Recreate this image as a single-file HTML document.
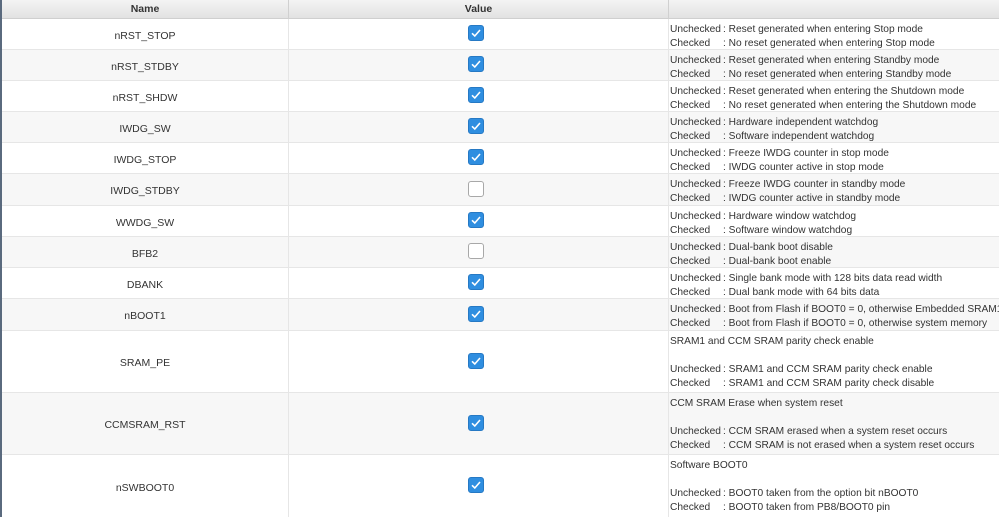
<!DOCTYPE html>
<html><head><style>
*{margin:0;padding:0;box-sizing:border-box}
body{width:999px;height:517px;overflow:hidden;background:#fff;font-family:"Liberation Sans",sans-serif;font-size:10.5px;color:#333;position:relative}
.lb{position:absolute;left:0;top:0;width:2px;height:517px;background:#5a6a7e;z-index:5}
.hdr{position:absolute;left:2px;top:0;width:997px;height:19px;background:linear-gradient(#f4f4f4,#e2e2e2);border-bottom:1px solid #cfcfcf;font-weight:bold;font-size:10.5px;color:#333}
.hdr div{position:absolute;top:0;height:19px;line-height:18px;text-align:center;border-right:1px solid #d0d0d0}
.row{position:absolute;left:2px;width:997px;border-bottom:1px solid #e6e6e6}
.row.g{background:#f7f7f7}
.c{position:absolute;top:0;bottom:0;border-right:1px solid #e6e6e6}
.n{left:0;width:287px;display:flex;align-items:center;justify-content:center;padding-top:3px}
.v{left:287px;width:380px;display:flex;align-items:center;justify-content:center;padding-bottom:2px}
.d{left:667px;width:330px;padding:4px 0 0 1px;line-height:14px;white-space:nowrap;border-right:none;font-size:10.2px}
.l{display:inline-block;width:53px}
.cb{width:16px;height:16px;border-radius:3px;background:#2f8ee0;border:1px solid #2679c4;display:flex;align-items:center;justify-content:center;margin-left:-6px}
.cb.u{background:#fff;border:1.5px solid #a8a8a8}
</style></head><body>
<div class="lb"></div>
<div class="hdr"><div style="left:0;width:287px">Name</div><div style="left:287px;width:380px">Value</div><div style="left:667px;width:330px;border:none"></div></div>

<div class="row" style="top:19px;height:31px"><div class="c n">nRST_STOP</div><div class="c v"><div class="cb"><svg width="12" height="12" viewBox="0 0 12 12"><path d="M2 6.3L4.8 9 10 3" fill="none" stroke="#fff" stroke-width="1.6"/></svg></div></div><div class="c d"><span class="l">Unchecked</span>: Reset generated when entering Stop mode<br><span class="l">Checked</span>: No reset generated when entering Stop mode</div></div>
<div class="row g" style="top:50px;height:31px"><div class="c n">nRST_STDBY</div><div class="c v"><div class="cb"><svg width="12" height="12" viewBox="0 0 12 12"><path d="M2 6.3L4.8 9 10 3" fill="none" stroke="#fff" stroke-width="1.6"/></svg></div></div><div class="c d"><span class="l">Unchecked</span>: Reset generated when entering Standby mode<br><span class="l">Checked</span>: No reset generated when entering Standby mode</div></div>
<div class="row" style="top:81px;height:31px"><div class="c n">nRST_SHDW</div><div class="c v"><div class="cb"><svg width="12" height="12" viewBox="0 0 12 12"><path d="M2 6.3L4.8 9 10 3" fill="none" stroke="#fff" stroke-width="1.6"/></svg></div></div><div class="c d"><span class="l">Unchecked</span>: Reset generated when entering the Shutdown mode<br><span class="l">Checked</span>: No reset generated when entering the Shutdown mode</div></div>
<div class="row g" style="top:112px;height:31px"><div class="c n">IWDG_SW</div><div class="c v"><div class="cb"><svg width="12" height="12" viewBox="0 0 12 12"><path d="M2 6.3L4.8 9 10 3" fill="none" stroke="#fff" stroke-width="1.6"/></svg></div></div><div class="c d"><span class="l">Unchecked</span>: Hardware independent watchdog<br><span class="l">Checked</span>: Software independent watchdog</div></div>
<div class="row" style="top:143px;height:31px"><div class="c n">IWDG_STOP</div><div class="c v"><div class="cb"><svg width="12" height="12" viewBox="0 0 12 12"><path d="M2 6.3L4.8 9 10 3" fill="none" stroke="#fff" stroke-width="1.6"/></svg></div></div><div class="c d"><span class="l">Unchecked</span>: Freeze IWDG counter in stop mode<br><span class="l">Checked</span>: IWDG counter active in stop mode</div></div>
<div class="row g" style="top:174px;height:32px"><div class="c n">IWDG_STDBY</div><div class="c v"><div class="cb u"></div></div><div class="c d"><span class="l">Unchecked</span>: Freeze IWDG counter in standby mode<br><span class="l">Checked</span>: IWDG counter active in standby mode</div></div>
<div class="row" style="top:206px;height:31px"><div class="c n">WWDG_SW</div><div class="c v"><div class="cb"><svg width="12" height="12" viewBox="0 0 12 12"><path d="M2 6.3L4.8 9 10 3" fill="none" stroke="#fff" stroke-width="1.6"/></svg></div></div><div class="c d"><span class="l">Unchecked</span>: Hardware window watchdog<br><span class="l">Checked</span>: Software window watchdog</div></div>
<div class="row g" style="top:237px;height:31px"><div class="c n">BFB2</div><div class="c v"><div class="cb u"></div></div><div class="c d"><span class="l">Unchecked</span>: Dual-bank boot disable<br><span class="l">Checked</span>: Dual-bank boot enable</div></div>
<div class="row" style="top:268px;height:31px"><div class="c n">DBANK</div><div class="c v"><div class="cb"><svg width="12" height="12" viewBox="0 0 12 12"><path d="M2 6.3L4.8 9 10 3" fill="none" stroke="#fff" stroke-width="1.6"/></svg></div></div><div class="c d"><span class="l">Unchecked</span>: Single bank mode with 128 bits data read width<br><span class="l">Checked</span>: Dual bank mode with 64 bits data</div></div>
<div class="row g" style="top:299px;height:32px"><div class="c n">nBOOT1</div><div class="c v"><div class="cb"><svg width="12" height="12" viewBox="0 0 12 12"><path d="M2 6.3L4.8 9 10 3" fill="none" stroke="#fff" stroke-width="1.6"/></svg></div></div><div class="c d"><span class="l">Unchecked</span>: Boot from Flash if BOOT0 = 0, otherwise Embedded SRAM1<br><span class="l">Checked</span>: Boot from Flash if BOOT0 = 0, otherwise system memory</div></div>
<div class="row" style="top:331px;height:62px"><div class="c n">SRAM_PE</div><div class="c v"><div class="cb"><svg width="12" height="12" viewBox="0 0 12 12"><path d="M2 6.3L4.8 9 10 3" fill="none" stroke="#fff" stroke-width="1.6"/></svg></div></div><div class="c d">SRAM1 and CCM SRAM parity check enable<br><br><span class="l">Unchecked</span>: SRAM1 and CCM SRAM parity check enable<br><span class="l">Checked</span>: SRAM1 and CCM SRAM parity check disable</div></div>
<div class="row g" style="top:393px;height:62px"><div class="c n">CCMSRAM_RST</div><div class="c v"><div class="cb"><svg width="12" height="12" viewBox="0 0 12 12"><path d="M2 6.3L4.8 9 10 3" fill="none" stroke="#fff" stroke-width="1.6"/></svg></div></div><div class="c d">CCM SRAM Erase when system reset<br><br><span class="l">Unchecked</span>: CCM SRAM erased when a system reset occurs<br><span class="l">Checked</span>: CCM SRAM is not erased when a system reset occurs</div></div>
<div class="row" style="top:455px;height:62px;border-bottom:none"><div class="c n">nSWBOOT0</div><div class="c v"><div class="cb"><svg width="12" height="12" viewBox="0 0 12 12"><path d="M2 6.3L4.8 9 10 3" fill="none" stroke="#fff" stroke-width="1.6"/></svg></div></div><div class="c d">Software BOOT0<br><br><span class="l">Unchecked</span>: BOOT0 taken from the option bit nBOOT0<br><span class="l">Checked</span>: BOOT0 taken from PB8/BOOT0 pin</div></div>
</body></html>
